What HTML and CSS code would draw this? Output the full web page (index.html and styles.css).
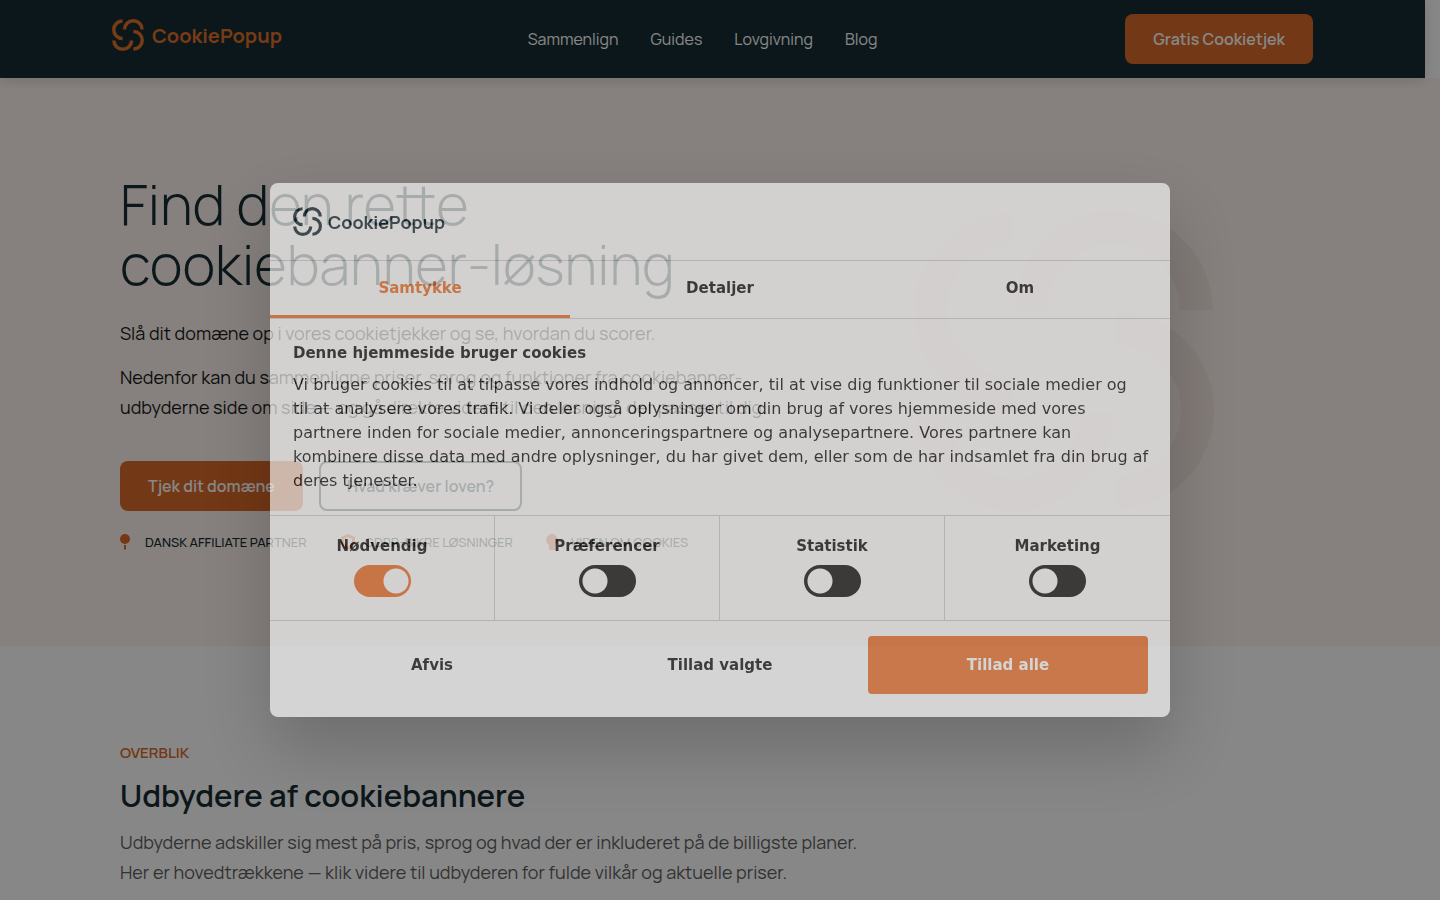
FILE: index.html
```html
<!DOCTYPE html>
<html lang="da">
<head>
    <meta charset="UTF-8">
    <meta name="viewport" content="width=device-width, initial-scale=1.0">
    <title>CookiePopup</title>
    <link rel="stylesheet" href="styles.css">
</head>
<body>
    <svg class="sprite" aria-hidden="true">
        <symbol id="mark" viewBox="0 0 100 100">
            <g fill="none" stroke="currentColor" stroke-width="11">
                <path d="M33 6A27.500 27.500 0 0 0 33 61"/>
                <path d="M39 33A27.500 27.500 0 0 1 94 33"/>
                <path d="M67 39A27.500 27.500 0 0 1 67 94"/>
                <path d="M6 67A27.500 27.500 0 0 0 61 67"/>
            </g>
        </symbol>
    </svg>

    <header class="site-header">
        <a class="logo" href="#">
            <svg class="logo-mark"><use href="#mark"/></svg>
            <span>CookiePopup</span>
        </a>
        <nav class="site-nav">
            <a href="#">Sammenlign</a>
            <a href="#">Guides</a>
            <a href="#">Lovgivning</a>
            <a href="#">Blog</a>
        </nav>
        <a class="button" href="#">Gratis Cookietjek</a>
    </header>

    <main>
        <section class="hero">
            <div class="container hero-inner">
                <div class="hero-text">
                    <h1>Find den rette cookiebanner-løsning</h1>
                    <p>Slå dit domæne op i vores cookietjekker og se, hvordan du scorer.</p>
                    <p>Nedenfor kan du sammenligne priser, sprog og funktioner fra cookiebanner-udbyderne side om side — og gå direkte videre til den løsning, der passer til dig.</p>
                    <div class="hero-actions">
                        <a class="button" href="#">Tjek dit domæne</a>
                        <a class="button button-outline" href="#">Hvad kræver loven?</a>
                    </div>
                    <ul class="badges">
                        <li>
                            <svg viewBox="0 0 17 18"><circle cx="5" cy="6" r="5"/><path d="M4 12h2v4l-1 1-1-1z"/></svg>
                            Dansk affiliate partner
                        </li>
                        <li>
                            <svg viewBox="0 0 17 18"><path fill-rule="evenodd" d="M8 1l7 3v6c0 3-4 6-7 7-3-1-7-4-7-7V4zM8 4L4 6v4l4 4 4-4V6z"/></svg>
                            GDPR-sikre løsninger
                        </li>
                        <li>
                            <svg viewBox="0 0 17 18"><path d="M6 1a6 6 0 0 1 3 11v5H3v-5A6 6 0 0 1 6 1z"/></svg>
                            Viden om cookies
                        </li>
                    </ul>
                </div>
                <svg class="hero-mark"><use href="#mark"/></svg>
            </div>
        </section>

        <section class="overview">
            <div class="container">
                <span class="eyebrow">Overblik</span>
                <h2>Udbydere af cookiebannere</h2>
                <p>Udbyderne adskiller sig mest på pris, sprog og hvad der er inkluderet på de billigste planer. Her er hovedtrækkene — klik videre til udbyderen for fulde vilkår og aktuelle priser.</p>
            </div>
        </section>
    </main>

    <div class="overlay"></div>

    <div class="dialog" role="dialog" aria-labelledby="dialog-title">
        <div class="dialog-header">
            <div class="logo">
                <svg class="logo-mark"><use href="#mark"/></svg>
                <span>CookiePopup</span>
            </div>
        </div>
        <div class="tabs" role="tablist">
            <button class="tab active" type="button" role="tab">Samtykke</button>
            <button class="tab" type="button" role="tab">Detaljer</button>
            <button class="tab" type="button" role="tab">Om</button>
        </div>
        <div class="dialog-body">
            <h2 id="dialog-title">Denne hjemmeside bruger cookies</h2>
            <p>Vi bruger cookies til at tilpasse vores indhold og annoncer, til at vise dig funktioner til sociale medier og til&nbsp;at analysere vores trafik. Vi deler også oplysninger om din brug af vores hjemmeside med vores partnere inden for sociale medier, annonceringspartnere og analysepartnere. Vores partnere kan kombinere disse data med andre oplysninger, du har givet dem, eller som de har indsamlet fra din brug af deres tjenester.</p>
        </div>
        <div class="choices">
            <label class="choice">Nødvendig <input type="checkbox" checked></label>
            <label class="choice">Præferencer <input type="checkbox"></label>
            <label class="choice">Statistik <input type="checkbox"></label>
            <label class="choice">Marketing <input type="checkbox"></label>
        </div>
        <div class="dialog-footer">
            <button type="button">Afvis</button>
            <button type="button">Tillad valgte</button>
            <button class="primary" type="button">Tillad alle</button>
        </div>
    </div>
</body>
</html>
```
FILE: styles.css
```css
* {
    box-sizing: border-box;
}
body {
    margin: 0;
    font-family: Manrope, Inter, sans-serif;
    background-color: #fff;
    color: #1a1a1a;
    overflow: hidden;
}
a {
    color: inherit;
    text-decoration: none;
}
.sprite {
    display: none;
}
.container {
    max-width: 1200px;
    margin: 0 auto;
}

/* Header */
.site-header {
    display: flex;
    align-items: center;
    justify-content: space-between;
    height: 78px;
    margin-right: 15px;
    padding: 0 112px;
    background-color: #162c32;
    color: #fff;
    box-shadow: 0 2px 12px rgba(0, 0, 0, 0.15);
    position: relative;
}
.logo {
    display: flex;
    align-items: center;
    gap: 8px;
    font-weight: 700;
}
.site-header .logo {
    width: 168px;
    padding-bottom: 8px;
    color: #e07029;
    font-size: 20px;
}
.logo-mark {
    width: 32px;
    height: 32px;
    flex: none;
}
.site-nav {
    display: flex;
    gap: 32px;
    font-size: 16px;
}
.button {
    display: inline-flex;
    align-items: center;
    height: 50px;
    padding: 0 28px;
    border-radius: 8px;
    background-color: #d96a28;
    color: #fff;
    font-size: 16px;
    font-weight: 600;
    white-space: nowrap;
}
.button-outline {
    padding: 0 26px;
    border: 2px solid #162c32;
    background-color: transparent;
    color: #162c32;
}

/* Hero */
.hero {
    background-color: #fdf4ee;
}
.hero-inner {
    display: flex;
    align-items: flex-start;
    justify-content: space-between;
    padding: 96px 106px 94px 0;
}
.hero-text {
    width: 660px;
}
h1 {
    margin: 0 0 24px;
    font-size: 56px;
    font-weight: 300;
    line-height: 60px;
    color: #162c32;
}
.hero-text p {
    margin: 0 0 14px;
    font-size: 18px;
    line-height: 30px;
}
.hero-actions {
    display: flex;
    gap: 16px;
    margin-top: 39px;
}
.badges {
    display: flex;
    gap: 33px;
    margin: 21px 0 0;
    padding: 0;
    list-style: none;
    font-size: 13px;
    font-weight: 500;
    line-height: 20px;
    text-transform: uppercase;
    white-space: nowrap;
    color: #162c32;
}
.badges li {
    display: flex;
    align-items: center;
    gap: 8px;
}
.badges svg {
    width: 17px;
    height: 18px;
    fill: #d96a28;
}
.hero-mark {
    width: 300px;
    height: 300px;
    margin-top: 37px;
    color: #904438;
    opacity: 0.06;
}

/* Overview */
.overview {
    padding: 96px 0;
}
.eyebrow {
    display: block;
    font-size: 15px;
    font-weight: 600;
    line-height: 22px;
    text-transform: uppercase;
    color: #d96a28;
}
.overview h2 {
    margin: 11px 0 12px;
    font-size: 31px;
    font-weight: 600;
    line-height: 40px;
    color: #162c32;
}
.overview p {
    max-width: 760px;
    margin: 0;
    font-size: 18px;
    line-height: 30px;
    color: #5f5f5f;
}

/* Cookie dialog */
.overlay {
    position: fixed;
    inset: 0;
    background-color: rgba(0, 0, 0, 0.47);
}
.dialog {
    position: fixed;
    top: 50%;
    left: 50%;
    width: 900px;
    max-width: 90%;
    transform: translate(-50%, -50%);
    border-radius: 8px;
    background-color: #fff;
    box-shadow: 0 32px 68px rgba(0, 0, 0, 0.3);
    color: #141414;
    font-family: "DejaVu Sans", sans-serif;
    font-size: 15px;
    opacity: 0.64;
}
.dialog button {
    border: 0;
    background: none;
    color: inherit;
    font: inherit;
    font-weight: 700;
    cursor: pointer;
}
.dialog-header {
    height: 78px;
    padding: 24px 23px;
    border-bottom: 1px solid #d0d0d0;
}
.dialog .logo {
    gap: 6px;
    color: #162c32;
    font-family: Manrope, Inter, sans-serif;
    font-size: 18px;
    line-height: 28px;
}
.dialog .logo-mark {
    width: 29px;
    height: 29px;
}
.tabs {
    display: grid;
    grid-template-columns: repeat(3, 1fr);
    border-bottom: 1px solid #d0d0d0;
}
.dialog .tab {
    height: 57px;
    border-bottom: 3px solid transparent;
}
.dialog .tab.active {
    border-color: #ec7028;
    color: #ec7028;
}
.dialog-body {
    padding: 22px 18px 22px 23px;
    line-height: 24px;
}
.dialog-body h2 {
    margin: 0 0 8px;
    font-size: 15px;
}
.dialog-body p {
    margin: 0;
    font-size: 16px;
}
.choices {
    display: grid;
    grid-template-columns: repeat(4, 1fr);
    border-top: 1px solid #d0d0d0;
    border-bottom: 1px solid #d0d0d0;
}
.choice {
    display: flex;
    flex-direction: column;
    align-items: center;
    gap: 7px;
    padding: 19px 0 23px;
    border-right: 1px solid #d0d0d0;
    font-weight: 700;
    line-height: 23px;
}
.choice:last-child {
    border-right: 0;
}
.choice input {
    width: 57px;
    height: 32px;
    margin: 0;
    appearance: none;
    border-radius: 16px;
    background: radial-gradient(circle at 16px 50%, #fff 12px, #141414 13px);
}
.choice input:checked {
    background: radial-gradient(circle at 42px 50%, #fff 12px, #ec7028 13px);
}
.dialog-footer {
    display: grid;
    grid-template-columns: repeat(3, 1fr);
    gap: 8px;
    padding: 15px 22px 23px;
}
.dialog-footer button {
    height: 58px;
    border-radius: 4px;
}
.dialog-footer .primary {
    background-color: #ec7028;
    color: #fff;
}
```
